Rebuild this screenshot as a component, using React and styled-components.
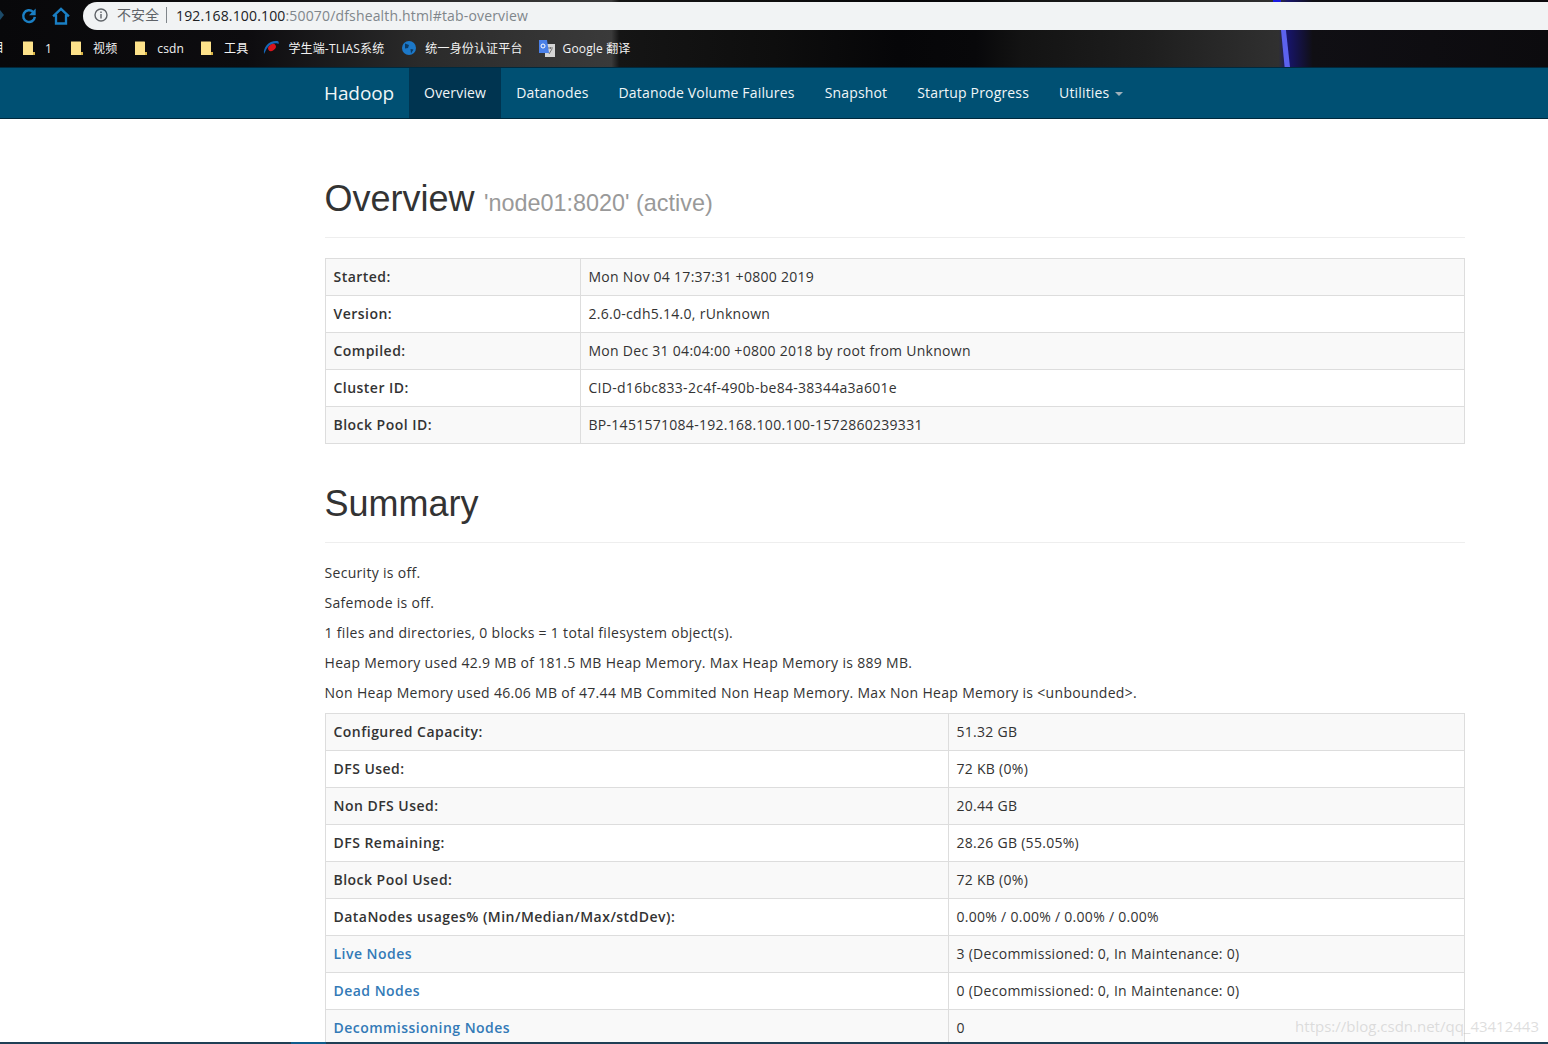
import React from "react";
import styled, { createGlobalStyle } from "styled-components";

const GlobalStyle = createGlobalStyle`
    html, body {
        margin: 0;
        padding: 0;
        background: #fff;
    }
    body {
        height: 1044px;
        overflow: hidden;
        font-family: "Open Sans", "Noto Sans CJK SC", sans-serif;
        font-size: 14px;
        color: #333;
    }
`;

const Page = styled.div`
    position: relative;
    height: 1044px;
    overflow: hidden;
`;

const BrowserTop = styled.div`
    height: 67px;
    background: linear-gradient(90deg, #08080a 0%, #0d0c0f 16%, #2a2a2a 27%, #3a3a3a 39.5%, #151515 40%, #0e0e0e 50%, #060608 58%, #08080a 63%, #131313 66%, #1e1e1e 74%, #303030 82.6%, #17146a 83.2%, #100f14 84.8%, #0c0b0e 100%);
    position: relative;
`;

const AddressRow = styled.div`
    height: 30px;
    display: flex;
    align-items: flex-end;
`;

const AddressBar = styled.div`
    flex: 1;
    margin-left: 12px;
    height: 28px;
    border-radius: 14px 0 0 14px;
    background: #f1f3f4;
    display: flex;
    align-items: center;
    padding: 0 0 2px 11px;
    box-sizing: border-box;
    font-size: 14px;
    letter-spacing: 0.16px;
    color: #80868b;
`;

const NavIcon = styled.svg`
    width: 20px;
    height: 20px;
    margin-left: ${props => props.$left}px;
    margin-bottom: 4px;
    flex: none;
`;

const Security = styled.span`
    margin-left: 9px;
    font-size: 14px;
    letter-spacing: 0;
    color: #5f6368;
    padding-right: 7px;
    border-right: 1px solid #80868b;
    line-height: 16px;
    margin-right: 9px;
`;

const UrlHost = styled.span`
    color: #202124;
`;

const BackArrow = styled.div`
    position: absolute;
    left: 0;
    top: 10px;
    border-left: 4px solid #1c4a68;
    border-top: 5px solid transparent;
    border-bottom: 5px solid transparent;
`;

const CutLabel = styled.span`
    position: absolute;
    left: -8px;
    top: 40px;
    font-size: 12px;
    line-height: 16px;
    color: #f2f2f2;
`;

const BookmarkRow = styled.div`
    height: 36px;
    display: flex;
    align-items: center;
    font-size: 12px;
    letter-spacing: 0.15px;
    color: #f2f2f2;
    padding-left: 22px;
    white-space: nowrap;
`;

const Bookmark = styled.div`
    display: flex;
    align-items: center;
    gap: ${props => props.$gap}px;
    margin-right: ${props => props.$right || 0}px;
`;

const Folder = styled.svg`
    width: 14px;
    height: 16px;
    flex: none;
`;

const Streak = styled.div`
    position: absolute;
    left: 1281px;
    top: 30px;
    width: 9px;
    height: 37px;
    background: #5c62ee;
    clip-path: polygon(0 0, 55% 0, 100% 100%, 40% 100%);
`;

const TopGlow = styled.div`
    position: absolute;
    left: 1273px;
    top: 0;
    width: 8px;
    height: 2px;
    background: #1a1ae0;
`;

const Navbar = styled.div`
    background: #005073;
    border-top: 1px solid #00293d;
    border-bottom: 1px solid #00293d;
    box-sizing: border-box;
    height: 52px;
    display: flex;
    padding-left: 309px;
`;

const Brand = styled.a`
    padding: 0 15px;
    font-size: 19px;
    letter-spacing: -0.1px;
    line-height: 50px;
    color: #f0f6f8;
`;

const NavItem = styled.a`
    padding: 0 15px;
    line-height: 50px;
    font-size: 14px;
    letter-spacing: 0.17px;
    color: #f0f6f8;
    background: ${props => props.$active ? "#003450" : "transparent"};
`;

const Caret = styled.span`
    display: inline-block;
    margin-left: 6px;
    vertical-align: middle;
    border-top: 4px solid #9fb0ba;
    border-left: 4px solid transparent;
    border-right: 4px solid transparent;
`;

const Container = styled.div`
    width: 1140px;
    margin-left: 325px;
`;

const PageHeader = styled.div`
    margin-top: ${props => props.$top}px;
    padding-bottom: 9px;
    border-bottom: 1px solid #eee;
    height: ${props => props.$height}px;
    box-sizing: border-box;
`;

const Title = styled.h1`
    margin: 0 0 0 -0.5px;
    font-family: "Liberation Sans", Arial, sans-serif;
    font-weight: 400;
    font-size: 36px;
    line-height: 40px;
    color: #333;
`;

const SubTitle = styled.small`
    font-size: 23.4px;
    color: #999;
    margin-left: -0.5px;
`;

const InfoTable = styled.div`
    display: grid;
    grid-template-columns: ${props => props.$label}px 1fr;
    margin-top: ${props => props.$top}px;
    border: 1px solid #ddd;
    border-bottom: none;
`;

const Cell = styled.div`
    height: 36px;
    line-height: 36px;
    padding-left: 7.5px;
    border-bottom: 1px solid #ddd;
    background: ${props => props.$odd ? "#f9f9f9" : "#fff"};
    font-weight: ${props => props.$head ? 600 : 400};
    letter-spacing: ${props => props.$head ? 0.47 : 0.28}px;
    border-right: ${props => props.$head ? "1px solid #ddd" : "none"};
    white-space: nowrap;
`;

const NodeLink = styled.a`
    color: #337ab7;
`;

const SummaryLines = styled.div`
    margin: 15px 0 0 -0.5px;
`;

const Line = styled.p`
    margin: 0;
    height: 30px;
    line-height: 30px;
    letter-spacing: 0.31px;
`;

const Watermark = styled.div`
    position: absolute;
    right: 9px;
    top: 1016px;
    font-size: 15px;
    color: rgba(190, 190, 190, 0.5);
`;

const Taskbar = styled.div`
    position: absolute;
    left: 0;
    right: 0;
    bottom: 0;
    height: 2px;
    background: #1f3f55;
`;

const TaskbarActive = styled.div`
    position: absolute;
    left: 291px;
    bottom: 0;
    width: 35px;
    height: 2px;
    background: #0f5c8c;
`;

const overview = [
    ["Started:", "Mon Nov 04 17:37:31 +0800 2019"],
    ["Version:", "2.6.0-cdh5.14.0, rUnknown"],
    ["Compiled:", "Mon Dec 31 04:04:00 +0800 2018 by root from Unknown"],
    ["Cluster ID:", "CID-d16bc833-2c4f-490b-be84-38344a3a601e"],
    ["Block Pool ID:", "BP-1451571084-192.168.100.100-1572860239331"],
];

const summaryLines = [
    "Security is off.",
    "Safemode is off.",
    "1 files and directories, 0 blocks = 1 total filesystem object(s).",
    "Heap Memory used 42.9 MB of 181.5 MB Heap Memory. Max Heap Memory is 889 MB.",
    "Non Heap Memory used 46.06 MB of 47.44 MB Commited Non Heap Memory. Max Non Heap Memory is <unbounded>.",
];

const summary = [
    ["Configured Capacity:", "51.32 GB"],
    ["DFS Used:", "72 KB (0%)"],
    ["Non DFS Used:", "20.44 GB"],
    ["DFS Remaining:", "28.26 GB (55.05%)"],
    ["Block Pool Used:", "72 KB (0%)"],
    ["DataNodes usages% (Min/Median/Max/stdDev):", "0.00% / 0.00% / 0.00% / 0.00%"],
    ["Live Nodes", "3 (Decommissioned: 0, In Maintenance: 0)", true],
    ["Dead Nodes", "0 (Decommissioned: 0, In Maintenance: 0)", true],
    ["Decommissioning Nodes", "0", true],
];

const navItems = ["Datanodes", "Datanode Volume Failures", "Snapshot", "Startup Progress"];

const FolderIcon = () => (
    <Folder viewBox="0 0 14 16">
        <path d="M1 1.5h9.5l.5.5v10h2v3H1z" fill="#fde28a" />
        <path d="M11 12h2v3h-2z" fill="#d9b545" />
    </Folder>
);

const rows = (data) => data.map(([label, value, link], i) => (
    <React.Fragment key={label}>
        <Cell $head $odd={i % 2 === 0}>{link ? <NodeLink>{label}</NodeLink> : label}</Cell>
        <Cell $odd={i % 2 === 0}>{value}</Cell>
    </React.Fragment>
));

export default function App() {
    return (
        <Page>
            <GlobalStyle />
            <BrowserTop>
                <BackArrow />
                <TopGlow />
                <AddressRow>
                    <NavIcon $left={19} viewBox="0 0 24 24" fill="none" stroke="#1a7fc4" strokeWidth="3">
                        <path d="M19 13a7 7 0 1 1-2.2-6" />
                        <path d="M20 3v8h-8z" fill="#1a7fc4" stroke="none" />
                    </NavIcon>
                    <NavIcon $left={12} viewBox="0 0 24 24" fill="none" stroke="#1a7fc4" strokeWidth="2.8">
                        <path d="M2.5 12.5L12 3.5l9.5 9M6 10.5V21h12V10.5" />
                    </NavIcon>
                    <AddressBar>
                        <svg width="14" height="14" viewBox="0 0 14 14" fill="none" stroke="#5f6368" strokeWidth="1.4">
                            <circle cx="7" cy="7" r="6" />
                            <path d="M7 6v4.5M7 3.5v1.5" />
                        </svg>
                        <Security>不安全</Security>
                        <span><UrlHost>192.168.100.100</UrlHost>:50070/dfshealth.html#tab-overview</span>
                    </AddressBar>
                </AddressRow>
                <CutLabel>目</CutLabel>
                <BookmarkRow>
                    <Bookmark $gap={9} $right={18}><FolderIcon />1</Bookmark>
                    <Bookmark $gap={9} $right={17}><FolderIcon />视频</Bookmark>
                    <Bookmark $gap={9} $right={16}><FolderIcon />csdn</Bookmark>
                    <Bookmark $gap={10} $right={15}><FolderIcon />工具</Bookmark>
                    <Bookmark $gap={9} $right={17}>
                        <svg width="16" height="16" viewBox="0 0 16 16">
                            <path d="M1 14C0 7 6 .5 14 1c1.800.2 2 1.500 1.500 3C14 2.500 8 3 5 7c-2 2.500-3 5-4 7z" fill="#1668b8" />
                            <ellipse cx="9" cy="7.500" rx="4.200" ry="3" fill="#d8141c" transform="rotate(-35 9 7.500)" />
                        </svg>
                        学生端-TLIAS系统
                    </Bookmark>
                    <Bookmark $gap={8} $right={15}>
                        <svg width="16" height="16" viewBox="0 0 16 16">
                            <circle cx="8" cy="8" r="7" fill="#1c78c8" />
                            <path d="M4 3.500l4 1.500-1 3-3 .5zM9.500 9l3 .5-2.500 4z" fill="#0c3a63" />
                        </svg>
                        统一身份认证平台
                    </Bookmark>
                    <Bookmark $gap={8}>
                        <svg width="17" height="17" viewBox="0 0 17 17">
                            <path d="M7 4h10v13H7z" fill="#d5d5d5" />
                            <path d="M10 8h5M12.500 7v2M11 14l3-5" stroke="#777" strokeWidth="1" fill="none" />
                            <path d="M1 0h8l2 13H1z" fill="#4a80e8" />
                            <circle cx="5" cy="6" r="2" fill="none" stroke="#fff" strokeWidth="1" />
                        </svg>
                        Google 翻译
                    </Bookmark>
                </BookmarkRow>
                <Streak />
            </BrowserTop>
            <Navbar>
                <Brand>Hadoop</Brand>
                <NavItem $active>Overview</NavItem>
                {navItems.map(item => <NavItem key={item}>{item}</NavItem>)}
                <NavItem>Utilities<Caret /></NavItem>
            </Navbar>
            <Container>
                <PageHeader $top={60} $height={59}>
                    <Title>Overview <SubTitle>'node01:8020' (active)</SubTitle></Title>
                </PageHeader>
                <InfoTable $label={255} $top={20}>{rows(overview)}</InfoTable>
                <PageHeader $top={40} $height={59}>
                    <Title>Summary</Title>
                </PageHeader>
                <SummaryLines>
                    {summaryLines.map(line => <Line key={line}>{line}</Line>)}
                </SummaryLines>
                <InfoTable $label={623} $top={5}>{rows(summary)}</InfoTable>
            </Container>
            <Watermark>https://blog.csdn.net/qq_43412443</Watermark>
            <Taskbar />
            <TaskbarActive />
        </Page>
    );
}
